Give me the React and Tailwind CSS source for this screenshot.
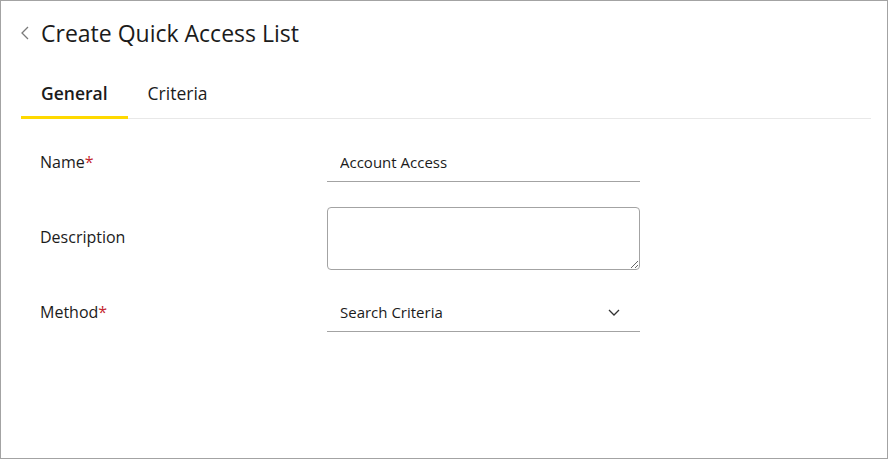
import React, { useState } from 'react'

function Field({ label, required, children }) {
  return (
    <div className="flex items-center">
      <div className="w-[326px] pl-[39px] pb-[4px] text-[16px] text-[#1b1b1b]">
        {label}
        {required && <span className="text-[#c4262e]">*</span>}
      </div>
      <div className="w-[313px]">{children}</div>
    </div>
  )
}

export default function App() {
  const [tab, setTab] = useState('general')
  const [name, setName] = useState('Account Access')
  const [desc, setDesc] = useState('')

  return (
    <div
      className="w-[888px] h-[459px] bg-white border border-[#a3a3a3] text-[#1b1b1b]"
      style={{ fontFamily: '"Open Sans", "Noto Sans", sans-serif' }}
    >
      <div className="flex items-center pt-[17px] pl-[20px]">
        <button className="w-[20px] h-[30px] flex items-center text-[#7a7a7a]">
          <svg width="8" height="14" viewBox="0 0 8 14" fill="none" stroke="currentColor" strokeWidth="1.3">
            <path d="M7 1 1 7l6 6" />
          </svg>
        </button>
        <h1 className="text-[23px] leading-[30px] font-normal">Create Quick Access List</h1>
      </div>

      <div className="flex mt-[22px] ml-[20px] mr-[16px] border-b border-[#e8e8e8] h-[49px]">
        <button
          onClick={() => setTab('general')}
          className={`px-5 pt-[11px] pb-[11px] -mb-px border-b-[3px] text-[17.5px] leading-[24px] ${tab === 'general' ? 'font-semibold border-[#ffd900]' : 'border-transparent'}`}
        >
          General
        </button>
        <button
          onClick={() => setTab('criteria')}
          className={`px-5 pt-[11px] pb-[11px] -mb-px border-b-[3px] text-[17.5px] leading-[24px] ${tab === 'criteria' ? 'font-semibold border-[#ffd900]' : 'border-transparent'}`}
        >
          Criteria
        </button>
      </div>

      <div className="flex flex-col mt-[27px]">
        <Field label="Name" required>
          <input
            value={name}
            onChange={e => setName(e.target.value)}
            className="w-full h-[36px] px-[13px] pb-[3px] text-[15px] border-b border-[#a3a3a3] outline-none"
          />
        </Field>
        <div className="mt-[25px]">
          <Field label="Description">
            <textarea
              value={desc}
              onChange={e => setDesc(e.target.value)}
              className="block w-full h-[63px] rounded-[4px] border border-[#a3a3a3] px-[12px] py-[6px] text-[15px] outline-none"
            />
          </Field>
        </div>
        <div className="mt-[26px]">
          <Field label="Method" required>
            <div className="flex items-center justify-between h-[36px] pl-[13px] pr-[20px] pb-[3px] border-b border-[#a3a3a3] text-[15px]">
              <span>Search Criteria</span>
              <svg width="12" height="7" viewBox="0 0 12 7" fill="none" stroke="#333" strokeWidth="1.3">
                <path d="M1 1l5 5 5-5" />
              </svg>
            </div>
          </Field>
        </div>
      </div>
    </div>
  )
}
